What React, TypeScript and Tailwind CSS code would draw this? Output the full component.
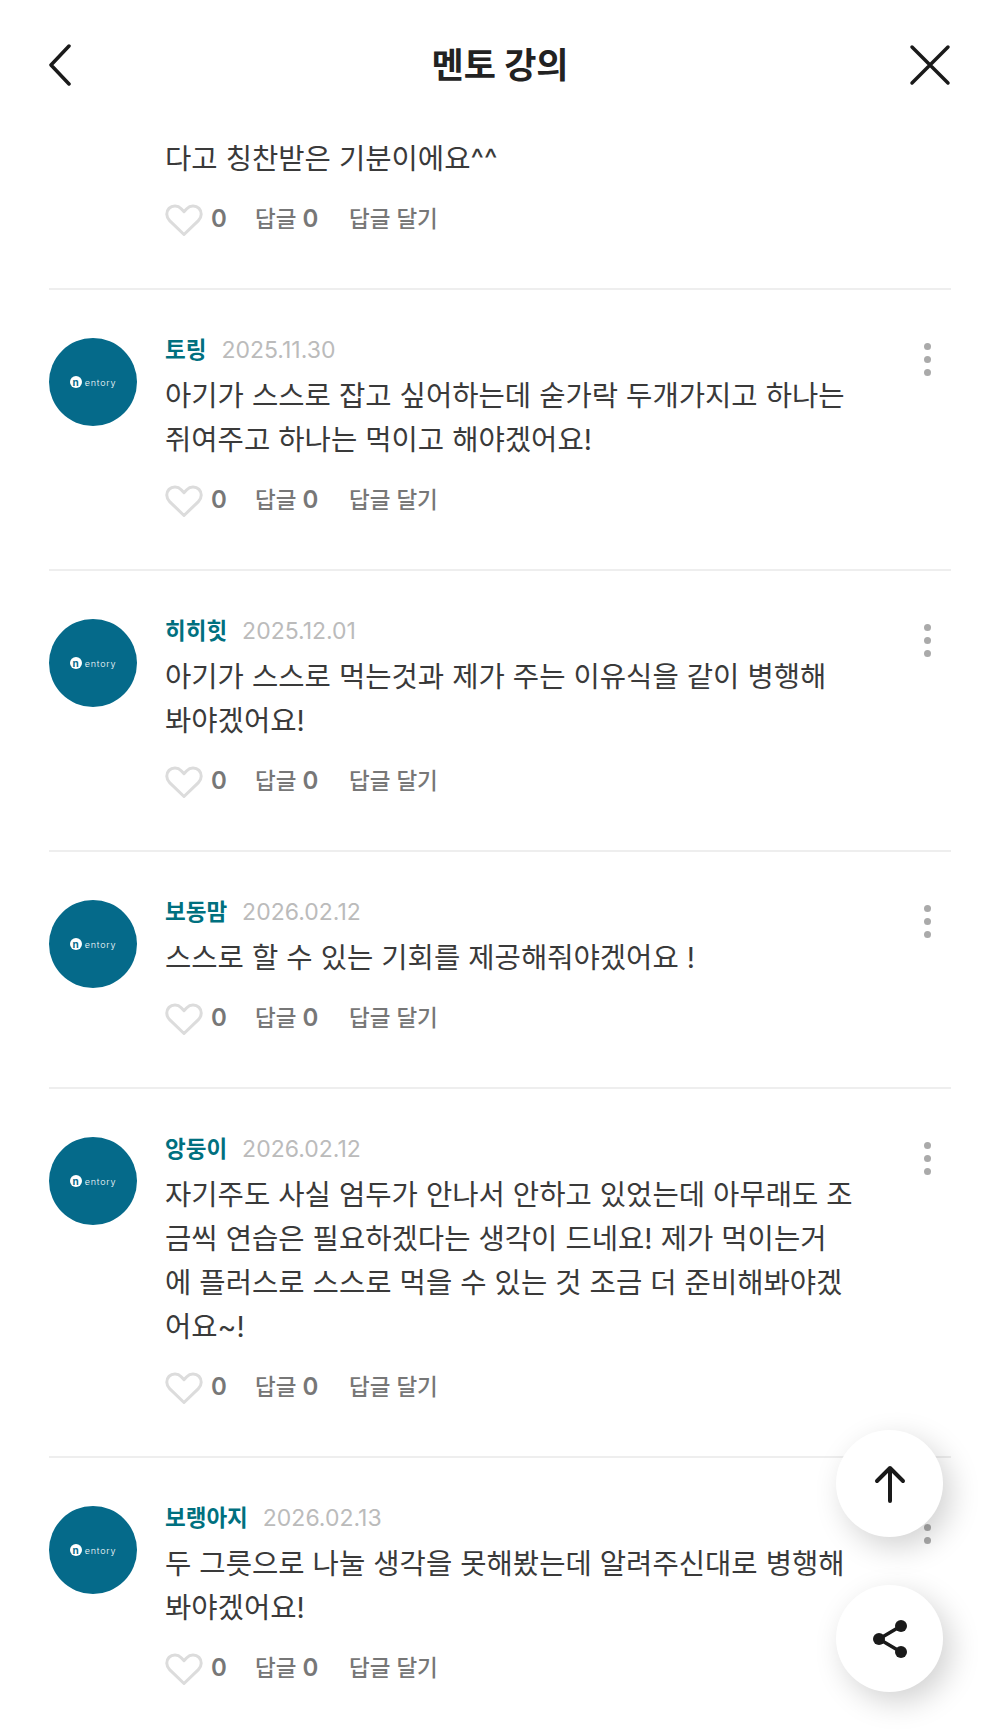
const comments = [
  { name: "토링", date: "2025.11.30", lines: ["아기가 스스로 잡고 싶어하는데 숟가락 두개가지고 하나는", "쥐여주고 하나는 먹이고 해야겠어요!"] },
  { name: "히히힛", date: "2025.12.01", lines: ["아기가 스스로 먹는것과 제가 주는 이유식을 같이 병행해", "봐야겠어요!"] },
  { name: "보동맘", date: "2026.02.12", lines: ["스스로 할 수 있는 기회를 제공해줘야겠어요 !"] },
  {
    name: "앙둥이",
    date: "2026.02.12",
    lines: [
      "자기주도 사실 엄두가 안나서 안하고 있었는데 아무래도 조",
      "금씩 연습은 필요하겠다는 생각이 드네요! 제가 먹이는거",
      "에 플러스로 스스로 먹을 수 있는 것 조금 더 준비해봐야겠",
      "어요~!",
    ],
  },
  { name: "보랭아지", date: "2026.02.13", lines: ["두 그릇으로 나눌 생각을 못해봤는데 알려주신대로 병행해", "봐야겠어요!"] },
];

function Actions() {
  return (
    <div className="flex h-9 items-center text-[22.5px] font-medium leading-9 text-[#777777]">
      <svg width="38" height="34" viewBox="0 0 38 34" fill="none" className="mt-[2px]">
        <path
          d="M19 31.5 4.6 17.6C.9 13.9 1 8.6 4 5.4c3.300-3.400 8.800-3.300 12.200.3L19 8.600l2.800-2.900c3.400-3.600 8.900-3.700 12.200-.3 3 3.200 3.100 8.500-.6 12.200L19 31.500Z"
          stroke="#dcdcdc"
          strokeWidth="3"
          strokeLinejoin="round"
        />
      </svg>
      <span className="ml-2 w-[44px] text-[24px] font-semibold">0</span>
      <span className="w-[94px]">
        답글 <span className="text-[24px] font-semibold">0</span>
      </span>
      <span>답글 달기</span>
    </div>
  );
}

function Avatar() {
  return (
    <div className="flex h-[88px] w-[88px] shrink-0 items-center justify-center gap-[3px] rounded-full bg-[#056a8a] text-white">
      <span className="flex h-3 w-3 items-center justify-center rounded-full bg-white text-[10px] font-bold leading-none text-[#056a8a]">n</span>
      <span className="text-[9px] font-light leading-none tracking-[0.8px]">entory</span>
    </div>
  );
}

function Kebab() {
  return (
    <div className="mt-[5px] flex w-[7px] shrink-0 flex-col gap-[6px]">
      <span className="h-[7px] w-[7px] rounded-full bg-[#aaaaaa]" />
      <span className="h-[7px] w-[7px] rounded-full bg-[#aaaaaa]" />
      <span className="h-[7px] w-[7px] rounded-full bg-[#aaaaaa]" />
    </div>
  );
}

function Comment({ name, date, lines }: { name: string; date: string; lines: string[] }) {
  return (
    <div className="flex border-t-2 border-[#eeeeee] pt-[48px] pb-[51px]">
      <Avatar />
      <div className="ml-[28px] min-w-0 flex-1">
        <div className="flex h-6 items-center gap-[15px]">
          <span className="text-[22.5px] font-bold text-[#00707f]">{name}</span>
          <span className="text-[23px] text-[#bbbbbb]">{date}</span>
        </div>
        <div className="mt-3 text-[28.6px] leading-[44px] text-[#3a3a3a]">
          {lines.map((line) => (
            <div key={line} className="whitespace-nowrap">{line}</div>
          ))}
        </div>
        <div className="mt-5">
          <Actions />
        </div>
      </div>
      <div className="mr-[20px]">
        <Kebab />
      </div>
    </div>
  );
}

export default function App() {
  return (
    <div className="relative h-[1734px] w-[1000px] overflow-hidden bg-white font-['Inter','Noto_Sans_CJK_KR',sans-serif]">
      <header className="flex h-[130px] items-center justify-between px-[49px]">
        <div className="w-[42px]">
          <svg width="24" height="42" viewBox="0 0 24 42" fill="none" className="-ml-[1px]">
            <path d="M21 2 3 21l18 19" stroke="#1a1a1a" strokeWidth="3.500" strokeLinecap="round" strokeLinejoin="round" />
          </svg>
        </div>
        <h1 className="text-[35px] font-bold text-[#222222]">멘토 강의</h1>
        <svg width="42" height="42" viewBox="0 0 42 42" fill="none">
          <path d="M3 3l36 36M39 3 3 39" stroke="#1a1a1a" strokeWidth="3.500" strokeLinecap="round" />
        </svg>
      </header>

      <div className="px-[49px]">
        <div className="mt-[7px] pl-[116px] pb-[51px]">
          <div className="text-[28.6px] leading-[44px] text-[#3a3a3a]">다고 칭찬받은 기분이에요^^</div>
          <div className="mt-5">
            <Actions />
          </div>
        </div>
        {comments.map((c) => (
          <Comment key={c.name} {...c} />
        ))}
      </div>

      <button type="button" className="absolute left-[836px] top-[1430px] flex h-[107px] w-[107px] items-center justify-center rounded-full bg-white shadow-[8px_10px_30px_rgba(0,0,0,0.18)]">
        <svg width="32" height="38" viewBox="0 0 32 38" fill="none">
          <path d="M16 36V3M3 16 16 3l13 13" stroke="#1a1a1a" strokeWidth="4" strokeLinecap="round" strokeLinejoin="round" />
        </svg>
      </button>
      <button type="button" className="absolute left-[836px] top-[1585px] flex h-[107px] w-[107px] items-center justify-center rounded-full bg-white shadow-[8px_10px_30px_rgba(0,0,0,0.18)]">
        <svg width="36" height="40" viewBox="0 0 36 40" fill="#1a1a1a">
          <path d="M7 20 29 7M7 20l22 13" stroke="#1a1a1a" strokeWidth="3.500" />
          <circle cx="7" cy="20" r="6" />
          <circle cx="29" cy="7" r="6" />
          <circle cx="29" cy="33" r="6" />
        </svg>
      </button>
    </div>
  );
}
